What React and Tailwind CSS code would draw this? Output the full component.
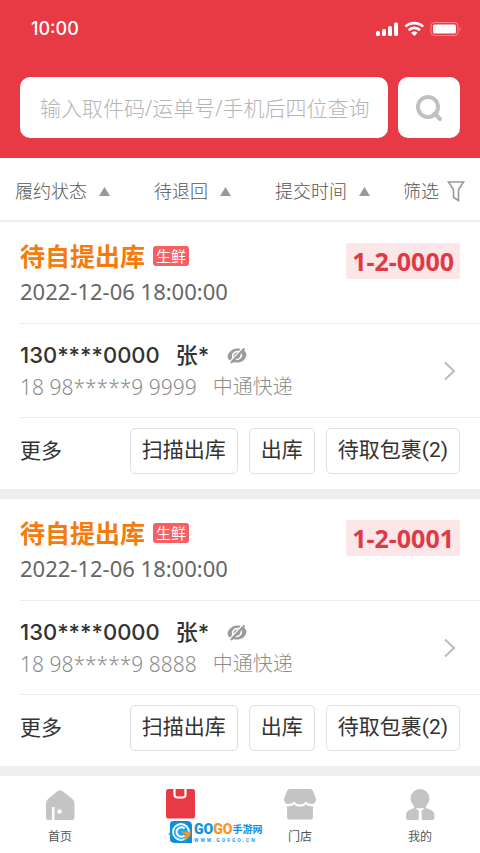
import { useState } from "react";

const filters = ["履约状态", "待退回", "提交时间"];

const orders = [
  {
    id: 1,
    status: "待自提出库",
    tag: "生鲜",
    time: "2022-12-06 18:00:00",
    code: "1-2-0000",
    phone: "130****0000",
    name: "张*",
    tracking: "18 98*****9 9999",
    carrier: "中通快递",
  },
  {
    id: 2,
    status: "待自提出库",
    tag: "生鲜",
    time: "2022-12-06 18:00:00",
    code: "1-2-0001",
    phone: "130****0000",
    name: "张*",
    tracking: "18 98*****9 8888",
    carrier: "中通快递",
  },
];

function StatusIcons() {
  return (
    <svg width="86" height="16" viewBox="0 0 86 16" fill="#fff" aria-hidden="true">
      <rect x="0" y="10" width="4" height="5" rx="1.500" />
      <rect x="6" y="8" width="4" height="7" rx="1.500" />
      <rect x="12" y="5" width="4" height="10" rx="1.500" />
      <rect x="18" y="1.500" width="4" height="13.500" rx="1.500" />
      <g fill="none" stroke="#fff" strokeWidth="2.600">
        <path d="M29.400 5.600a13 13 0 0 1 17.800 0" />
        <path d="M32.600 9.200a8.200 8.200 0 0 1 11.400 0" />
      </g>
      <path d="M35 11.800a4.800 4.800 0 0 1 6.600 0L38.300 15z" />
      <rect x="55" y="1.500" width="27" height="13" rx="3.500" fill="none" stroke="#fff" strokeOpacity="0.4" />
      <rect x="57" y="3.500" width="23" height="9" rx="1.500" />
      <path d="M83.500 6v4.500c1.600-.7 1.600-3.800 0-4.500z" fillOpacity="0.4" />
    </svg>
  );
}

function EyeOff() {
  return (
    <svg width="20" height="17" viewBox="0 0 20 17" fill="none" aria-hidden="true">
      <path d="M.5 9C2 4 6 1.500 10.500 1.500C15 1.500 19 3.500 19.500 8C18.500 13 14.500 15.500 10 15.500C5 15.500 1 14 .5 9z" fill="#9b9b9b" />
      <path d="M6.200 11.500C4.300 7.500 7.500 4 11.500 4.600" stroke="#fff" strokeWidth="1.500" />
      <path d="M14 6C15.500 9.500 12.500 13 8.500 12.500" stroke="#fff" strokeWidth="1.500" />
      <path d="M2 15.500L16 .5" stroke="#fff" strokeWidth="1.300" />
      <path d="M4 16L17.500 1.500" stroke="#9b9b9b" strokeWidth="2" />
    </svg>
  );
}

function HomeIcon() {
  return (
    <svg width="32" height="32" viewBox="0 0 32 32" aria-hidden="true">
      <path
        fill="#c5c4c5"
        d="M14 1.800Q16 .6 18 1.800L28.500 10Q30.500 12 30.500 14V28.500Q30.500 31 28 31H10.500V18H8V31H4Q2 31 2 28.500V14Q2 12 4 10z"
      />
      <circle cx="15.500" cy="22.500" r="2.200" fill="#fff" />
    </svg>
  );
}

function PackageIcon() {
  return (
    <svg width="32" height="32" viewBox="0 0 32 32" aria-hidden="true">
      <rect x="2" y="0" width="29" height="29.500" rx="2.500" fill="#e83a44" />
      <path d="M10.500 -1V5.500Q10.500 8.500 13.500 8.500H18.500Q21.500 8.500 21.500 5.500V-1" fill="none" stroke="#fff" strokeWidth="2.200" />
    </svg>
  );
}

function StoreIcon() {
  return (
    <svg width="32" height="32" viewBox="0 0 32 32" fill="#c5c4c5" aria-hidden="true">
      <path d="M6 0H26Q28 0 29 2L32 10Q32 15 27.500 15Q24 15 22 12.500Q19.500 15.500 16 15.500T10 12.500Q8 15 4.500 15Q0 15 0 10L3 2Q4 0 6 0z" />
      <path d="M3 17Q7 18 10 15.500Q16 20 22 15.500Q25 18 29 17V28Q29 30.500 26.500 30.500H5.500Q3 30.500 3 28z" />
    </svg>
  );
}

function UserIcon() {
  return (
    <svg width="32" height="32" viewBox="0 0 32 32" fill="#c5c4c5" aria-hidden="true">
      <circle cx="16" cy="9.500" r="9.500" />
      <path d="M10 15H22V19L28 21.500Q30.500 23 30.500 26V29Q30.500 31 28.500 31H4Q2 31 2 29V26Q2 23 4.500 21.500L10 19z" />
      <path d="M11.500 19.300H20.500L17.500 22L18 31H14.500L15 22z" fill="#fff" />
    </svg>
  );
}

const tabs = [
  { label: "首页", Icon: HomeIcon },
  { label: "包裹", Icon: PackageIcon },
  { label: "门店", Icon: StoreIcon },
  { label: "我的", Icon: UserIcon },
];

function SiteMark() {
  return (
    <a href="#gogo" className="absolute top-8 left-[50px] flex items-center gap-[2px]">
      <svg width="22" height="22" viewBox="0 0 22 22" aria-hidden="true">
        <path d="M3 0H17Q22 0 22 5V22H5Q0 22 0 17V3Q0 0 3 0z" fill="#0b8fe0" />
        <circle cx="11" cy="11" r="8" fill="#19a7f0" stroke="#fff" strokeWidth="1.800" />
        <path d="M14.500 7.500a4.700 4.700 0 1 0 0 7" fill="none" stroke="#fff" strokeWidth="2.200" />
        <path d="M10 10.500H21Q20.500 17 14 19.500L15.500 13.500z" fill="#f79420" />
      </svg>
      <span className="flex flex-col">
        <span className="flex items-center text-[14px] leading-4 font-bold whitespace-nowrap text-[#0a93e6]">
          <span className="font-['Roboto',sans-serif] font-black">GO</span>
          <span className="font-['Roboto',sans-serif] font-black text-[#f79420]">GO</span>
          <span className="text-[10px]">手游网</span>
        </span>
        <span className="font-['Roboto',sans-serif] text-[5px] leading-[6px] font-bold tracking-[2px] whitespace-nowrap text-[#1ba0ea]">
          WWW.GO9GO.CN
        </span>
      </span>
    </a>
  );
}

function OrderCard({ order }) {
  return (
    <article className="bg-white pl-5">
      <div className="flex items-start justify-between pt-[18px] pr-5 pb-[13px]">
        <div>
          <div className="flex items-center gap-2">
            <h2 className="text-[25px] leading-8 font-bold text-[#f57c0c]">{order.status}</h2>
            <span className="rounded-[3px] bg-[#f85f62] px-[3px] text-[15px] leading-5 text-white">{order.tag}</span>
          </div>
          <p className="text-[22px] leading-[38px] text-[#666]">{order.time}</p>
        </div>
        <strong className="mt-[3px] rounded-[2px] bg-[#fce6e8] px-[6px] text-[25px] leading-9 font-bold text-[#dd3a45]">
          {order.code}
        </strong>
      </div>

      <div className="flex items-center justify-between border-t border-[#ebe9eb] pt-[15px] pr-6 pb-[14px]">
        <div>
          <div className="flex items-center font-['Inter','Noto_Sans_CJK_SC',sans-serif] text-[22px] leading-8 font-medium text-[#333]">
            <span>{order.phone}</span>
            <span className="ml-4">{order.name}</span>
            <button type="button" aria-label="显示号码" className="ml-[18px]">
              <EyeOff />
            </button>
          </div>
          <p className="flex gap-4 leading-8 font-light text-[#8c8c8c]">
            <span className="text-[21px]">{order.tracking}</span>
            <span className="text-[20px]">{order.carrier}</span>
          </p>
        </div>
        <svg width="14" height="20" viewBox="0 0 14 20" fill="none" stroke="#bbb" strokeWidth="2" aria-hidden="true">
          <path d="M3 1.500L12 10L3 18.500" />
        </svg>
      </div>

      <div className="flex items-center justify-between border-t border-[#ebe9eb] pt-[10px] pr-5 pb-[15px] text-[21px] text-[#333]">
        <button type="button">更多</button>
        <div className="flex gap-[11px] font-['Roboto','Noto_Sans_CJK_SC',sans-serif]">
          {["扫描出库", "出库", "待取包裹(2)"].map((label) => (
            <button key={label} type="button" className="h-[46px] rounded-[5px] border border-[#e2dfe2] px-[11px]">
              {label}
            </button>
          ))}
        </div>
      </div>
    </article>
  );
}

export default function App() {
  const [keyword, setKeyword] = useState("");

  return (
    <div className="flex min-h-screen flex-col bg-white font-['Noto_Sans','Noto_Sans_CJK_SC',sans-serif]">
      <header className="bg-[#e83a44] pt-[17px] pb-5">
        <div className="flex items-center justify-between pr-[18px] pl-[31px]">
          <span className="font-['Inter',sans-serif] text-[18px] leading-6 font-medium text-white">10:00</span>
          <StatusIcons />
        </div>
        <form className="mt-9 flex gap-[10px] px-5" onSubmit={(e) => e.preventDefault()}>
          <input
            type="text"
            aria-label="搜索包裹"
            placeholder="输入取件码/运单号/手机后四位查询"
            value={keyword}
            onChange={(e) => setKeyword(e.target.value)}
            className="h-[61px] min-w-0 flex-1 rounded-[10px] bg-white pr-2 pl-5 text-[21px] font-light text-[#333] outline-none placeholder:text-[#b5b5b5]"
          />
          <button
            type="submit"
            aria-label="搜索"
            className="flex h-[61px] w-[62px] items-center justify-center rounded-[10px] bg-white"
          >
            <svg width="28" height="28" viewBox="0 0 28 28" fill="none" stroke="#c1c0c1" strokeWidth="4" aria-hidden="true">
              <circle cx="13" cy="13" r="10" />
              <path d="M19.500 19.500L25 25" strokeLinecap="round" />
            </svg>
          </button>
        </form>
      </header>

      <nav className="flex h-16 items-center gap-[33px] border-b-2 border-[#efedef] px-[15px] pt-1 text-[18px] font-light text-[#555]">
        <div className="flex flex-1 justify-between">
          {filters.map((label) => (
            <button key={label} type="button" className="flex items-center gap-3">
              {label}
              <svg width="11" height="9" viewBox="0 0 11 9" fill="#999" aria-hidden="true">
                <path d="M5.500 0L11 9H0z" />
              </svg>
            </button>
          ))}
        </div>
        <button type="button" className="flex items-center gap-2">
          筛选
          <svg width="18" height="21" viewBox="0 0 18 21" fill="none" stroke="#999" strokeWidth="1.600" aria-hidden="true">
            <path d="M1.500 1H16.500L11.500 8.500V19.500L6.500 16.500V8.500z" />
          </svg>
        </button>
      </nav>

      <main className="flex flex-1 flex-col gap-[10px] bg-[#efedef] pb-[10px]">
        {orders.map((order) => (
          <OrderCard key={order.id} order={order} />
        ))}
      </main>

      <footer className="grid grid-cols-4 bg-white pt-[13px] pb-[6px]">
        {tabs.map(({ label, Icon }, i) => (
          <div key={label} className="relative flex justify-center">
            <button
              type="button"
              className={
                i === 1
                  ? "flex flex-col items-center gap-[6px] text-[12px] leading-5 text-[#e83a44]"
                  : "flex flex-col items-center gap-[6px] text-[12px] leading-5 text-[#555]"
              }
            >
              <Icon />
              {label}
            </button>
            {i === 1 && <SiteMark />}
          </div>
        ))}
      </footer>
    </div>
  );
}
